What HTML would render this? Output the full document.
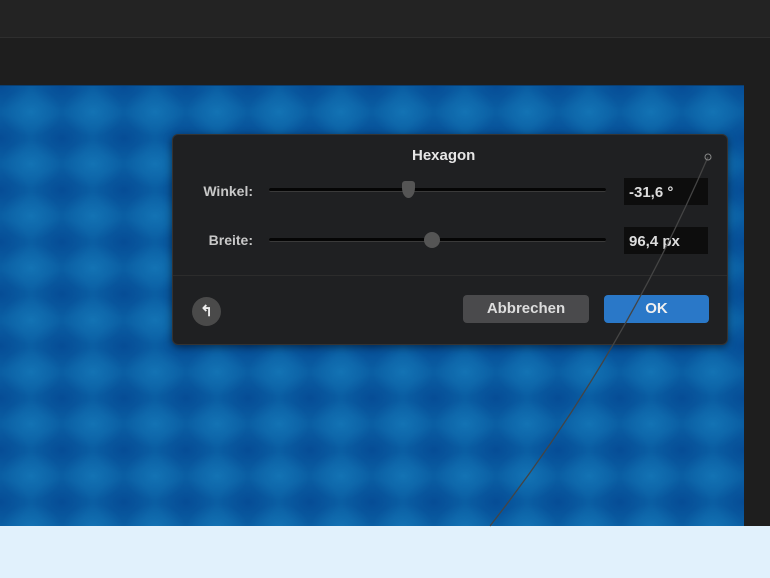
<!DOCTYPE html>
<html><head><style>
*{margin:0;padding:0;box-sizing:border-box}
body{width:770px;height:578px;overflow:hidden;background:#1e1e1e;position:relative;font-family:"Liberation Sans",sans-serif}
.top{position:absolute;left:0;top:0;width:770px;height:38px;background:#232323;border-bottom:1px solid #2e2e2e}
.img{position:absolute;left:0;top:85px;width:744px;height:441px;background-color:#0a5ea3;
background-image:radial-gradient(ellipse 30px 24px at 50% 50%,rgba(30,140,200,.45),rgba(30,140,200,0) 100%),radial-gradient(ellipse 30px 24px at 50% 50%,rgba(0,50,130,.4),rgba(0,50,130,0) 100%);
background-size:62px 52px,62px 52px;background-position:0 0,31px 26px;border-top:1px solid #0a3e70}
.foot{position:absolute;left:0;top:526px;width:770px;height:52px;background:#e1f1fc}
.dlg{position:absolute;left:172px;top:134px;width:556px;height:211px;background:#1f2022;border:1px solid #333;border-radius:6px;box-shadow:0 2px 8px rgba(0,0,0,.5)}
.t{position:absolute;color:#e6e6e6;font-size:15px;font-weight:bold}
.lab{position:absolute;color:#c8c8c8;font-size:14px;font-weight:bold;text-align:right;width:70px}
.tr{position:absolute;left:96px;width:337px;height:4px;background:#050505;border-radius:2px;border-bottom:1px solid #3a3a3a}
.val{position:absolute;left:451px;width:84px;height:27px;background:#0d0d0d;color:#ddd;font-size:15px;font-weight:bold;padding:6px 0 0 5px}
.btn{position:absolute;top:160px;height:28px;border-radius:4px;color:#ddd;font-size:15px;font-weight:bold;text-align:center;line-height:28px}
</style></head><body>
<div class="top"></div>
<div class="img"></div>
<div class="foot"></div>
<div class="dlg">
<div class="t" style="left:239px;top:12px">Hexagon</div>
<div class="lab" style="left:10px;top:48px">Winkel:</div>
<div class="tr" style="top:53px"></div>
<div style="position:absolute;left:229px;top:46px;width:13px;height:17px;background:#555;border-radius:3px 3px 50% 50%/3px 3px 60% 60%"></div>
<div class="val" style="top:43px">-31,6 °</div>
<div class="lab" style="left:10px;top:97px">Breite:</div>
<div class="tr" style="top:103px"></div>
<div style="position:absolute;left:251px;top:97px;width:16px;height:16px;background:#555;border-radius:50%"></div>
<div class="val" style="top:92px">96,4 px</div>
<div style="position:absolute;left:0;top:140px;width:554px;height:1px;background:#2c2c2c"></div>
<div style="position:absolute;left:19px;top:162px;width:29px;height:29px;border-radius:50%;background:#4a4a4a;color:#eee;font-size:15px;text-align:center;line-height:29px;font-weight:bold">↰</div>
<div class="btn" style="left:290px;width:126px;background:#4a4a4c">Abbrechen</div>
<div class="btn" style="left:431px;width:105px;background:#2a78c8;color:#f0f0f0">OK</div>
</div>
<svg style="position:absolute;left:0;top:0" width="770" height="578"><path d="M708 157 Q620 360 490 526" stroke="#444" stroke-width="1.3" fill="none"/><circle cx="708" cy="157" r="3" stroke="#888" fill="none"/></svg>
</body></html>
